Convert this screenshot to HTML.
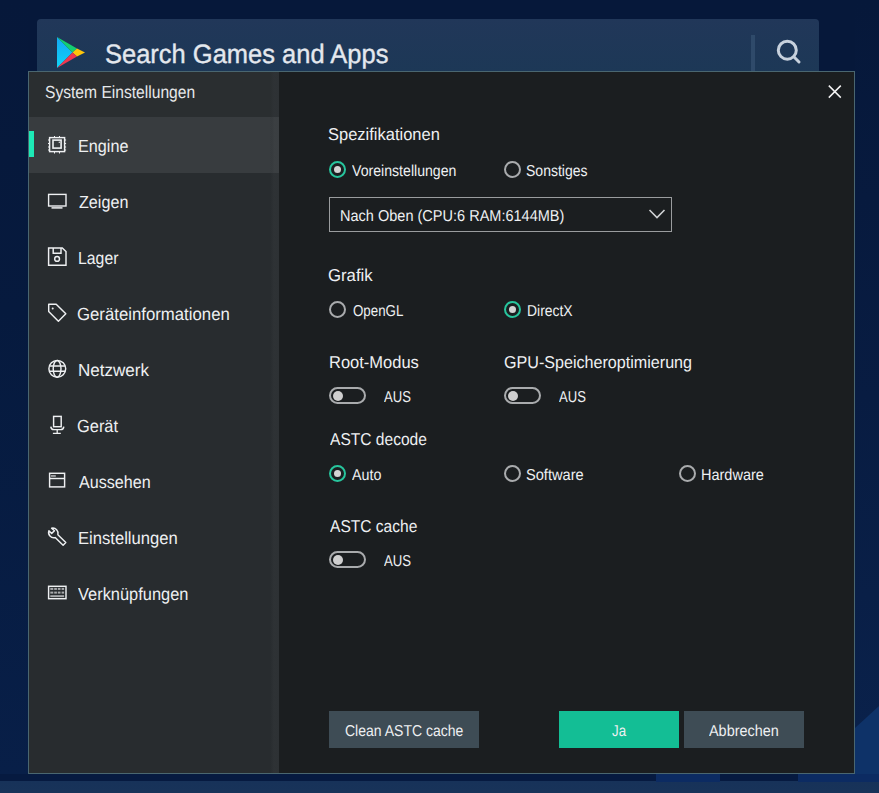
<!DOCTYPE html>
<html><head><meta charset="utf-8">
<style>
*{margin:0;padding:0;box-sizing:border-box}
html,body{width:879px;height:793px;overflow:hidden}
body{position:relative;background:#06183a;font-family:"Liberation Sans",sans-serif;color:#eceef0}
.a{position:absolute}
.t{position:absolute;white-space:nowrap;line-height:1;transform-origin:0 0;text-rendering:geometricPrecision}
#bgR{left:855px;top:0;width:24px;height:793px;background:linear-gradient(#06183a 0%,#081c42 50%,#0a224c 100%)}
#bgB{left:0;top:774px;width:879px;height:19px;background:linear-gradient(#061a40 0,#061a40 7px,#173259 7px,#183359 100%)}
#search{left:37px;top:19px;width:782px;height:60px;background:linear-gradient(#213759,#1c3856);border-radius:4px}
#dlg{left:28px;top:71px;width:827px;height:703px;border:1px solid #4a6670;background:#1b1e20}
#side{left:29px;top:72px;width:250px;height:701px;background:#282c2f}
#sideHead{left:29px;top:72px;width:250px;height:45px;background:#2a2e30}
#active{left:29px;top:117px;width:250px;height:56px;background:#383c3f}
#bar{left:29px;top:131px;width:5px;height:26px;background:#1de9b6}
.radio{position:absolute;width:17px;height:17px;border-radius:50%;border:2px solid #a9abad}
.radio.on{border-color:#27c59d}
.radio.on::after{content:"";position:absolute;left:3px;top:3px;width:7px;height:7px;border-radius:50%;background:#d4d4d4}
.tog{position:absolute;width:37px;height:17px;border-radius:9px;border:2px solid #a9abad}
.tog::after{content:"";position:absolute;left:1.5px;top:1.5px;width:10px;height:10px;border-radius:50%;background:#cfcfcf}
.btn{position:absolute;top:711px;height:37px;background:#3e4c55}
</style></head><body>
<div class="a" style="left:0;top:0;width:28px;height:774px;background:linear-gradient(#06183a 0%,#061a3e 40%,#081f48 100%)"></div>
<div class="a" id="bgR"></div>
<div class="a" id="bgB"></div>
<div class="a" style="left:656px;top:774px;width:64px;height:8px;background:#0c2b62"></div>
<div class="a" style="left:798px;top:774px;width:81px;height:8px;background:#0c2b62"></div>
<svg class="a" style="left:855px;top:600px" width="24" height="174"><path d="M0 128 L24 106 V174 H0 Z" fill="#0e3268"/></svg>
<div class="a" id="search">
  <svg class="a" style="left:19px;top:18px" width="30" height="31" viewBox="0 0 30 31">
    <defs><linearGradient id="pb" x1="0" y1="0" x2="0" y2="1"><stop offset="0" stop-color="#14a8f4"/><stop offset="1" stop-color="#10d4f6"/></linearGradient></defs><path d="M1 0 L16.5 15.5 L1 31 Z" fill="url(#pb)"/>
    <path d="M1 0 L21 11.5 L16.5 15.5 Z" fill="#14d072"/>
    <path d="M21 11.5 L29 15.5 L21 19.5 L16.5 15.5 Z" fill="#ffc60a"/>
    <path d="M16.5 15.5 L21 19.5 L1 31 Z" fill="#f0374f"/>
  </svg>
  <div class="t" style="left:68px;top:22px;font-size:26.5px;transform:scaleX(0.962);color:#e4e8ee;-webkit-text-stroke:0.35px #e4e8ee">Search Games and Apps</div>
  <div class="a" style="left:714px;top:16px;width:4px;height:40px;background:#2f4a6a"></div>
  <svg class="a" style="left:736px;top:19px" width="30" height="30" viewBox="0 0 30 30">
    <circle cx="14.3" cy="12.2" r="9" fill="none" stroke="#c7d1dd" stroke-width="3"/>
    <path d="M20.8 18.8 L26 24" stroke="#c7d1dd" stroke-width="3" stroke-linecap="round"/>
  </svg>
</div>
<div class="a" id="dlg"></div>
<div class="a" id="side"></div>
<div class="a" id="sideHead"></div>
<div class="a" id="active"></div>
<div class="a" id="bar"></div>
<div class="a" style="left:270px;top:72px;width:9px;height:701px;background:linear-gradient(90deg,rgba(46,50,53,0),#2e3235 45%,#2d3134)"></div>
<div class="a" style="left:270px;top:117px;width:9px;height:56px;background:linear-gradient(90deg,rgba(60,64,67,0),#3b3f42 45%,#3a3e41)"></div>
<svg class="a" style="left:827px;top:84px" width="16" height="16" viewBox="0 0 16 16">
  <path d="M1.8 1.6 L13.8 13.6 M13.8 1.6 L1.8 13.6" stroke="#f2f2f2" stroke-width="1.5"/>
</svg>
<svg class="a" style="left:0;top:0" width="879" height="793" viewBox="0 0 879 793" fill="none" stroke="#eef0f2" stroke-width="1.45">
  <!-- chip -->
  <g>
    <rect x="49.6" y="137.6" width="15" height="14"/>
    <rect x="53" y="140.1" width="8.1" height="8" stroke-width="1.6"/>
    <path d="M54.5 136 v1.5 M59.5 136 v1.5 M54.5 152 v1.5 M59.5 152 v1.5 M48 140 h1.5 M48 143.5 h1.5 M48 147 h1.5 M48 150 h1.5 M64.6 140 h1.5 M64.6 143.5 h1.5 M64.6 147 h1.5 M64.6 150 h1.5" stroke-width="1"/>
    <circle cx="59.3" cy="142.3" r="0.7" fill="#e9ebed" stroke="none"/>
  </g>
  <!-- monitor -->
  <rect x="48.6" y="194.4" width="17.4" height="11.6" stroke-width="1.4"/>
  <path d="M51.5 207.9 H62.5" stroke-width="1.5"/>
  <!-- floppy -->
  <path d="M48.6 247.9 H62.3 L66 251.6 V265.2 H48.6 Z"/>
  <path d="M53.2 247.9 V253.2 H61 V247.9"/>
  <circle cx="57.1" cy="258.9" r="2.4"/>
  <!-- tag -->
  <path d="M48.7 304.2 H56.2 L65.8 313.8 L58.4 321.2 L48.7 311.6 Z" stroke-linejoin="round"/>
  <circle cx="52.7" cy="308.4" r="1" fill="#e9ebed" stroke="none"/>
  <!-- globe -->
  <circle cx="57.3" cy="368.8" r="8.4"/>
  <ellipse cx="57.1" cy="368.8" rx="3.9" ry="8.4"/>
  <path d="M49.5 366 H65 M49.5 371.3 H65" stroke-width="1.5"/>
  <!-- device -->
  <rect x="53.6" y="416.4" width="7.6" height="10.3"/>
  <path d="M50.8 426.6 Q51 429.6 54 429.6 H60.6 Q63.6 429.6 63.8 426.6" />
  <path d="M57.2 429.6 V432.8 M52.9 433.3 H60.8" stroke-width="1.3"/>
  <!-- window -->
  <rect x="49.6" y="473.3" width="15" height="13.6"/>
  <path d="M49.6 478.5 H64.6"/>
  <rect x="51" y="475" width="4.8" height="1.9" fill="#9c9ea0" stroke="none"/>
  <!-- wrench -->
  <path transform="translate(47,526)" d="M1.9 4.7 L4.7 7.4 L7.5 4.8 L4.6 2.2 A5.3 5.3 0 0 1 10.9 8.8 L18.8 16.5 L16.1 19.2 L8.2 11.6 A5.3 5.3 0 0 1 1.9 4.7 Z" stroke-linejoin="round"/>
  <!-- keyboard -->
  <rect x="48.6" y="586.3" width="17.4" height="12.4"/>
  <g fill="#a9abad" stroke="none">
    <rect x="50.3" y="587.9" width="3" height="2"/><rect x="54.2" y="587.9" width="2.7" height="2"/><rect x="57.8" y="587.9" width="2.7" height="2"/><rect x="61.6" y="587.9" width="2.5" height="2"/>
    <rect x="50.3" y="591.6" width="3" height="2"/><rect x="54.2" y="591.6" width="2.7" height="2"/><rect x="57.8" y="591.6" width="2.7" height="2"/><rect x="61.6" y="591.6" width="2.5" height="2"/>
    <rect x="50.3" y="595.2" width="13.8" height="1.9"/>
  </g>
</svg>


<div class="radio on" style="left:329px;top:161px"></div>
<div class="radio" style="left:504px;top:161px"></div>
<div class="a" style="left:329px;top:197px;width:343px;height:35px;border:1px solid #9a9c9e"></div>
<svg class="a" style="left:648px;top:208px" width="18" height="12" viewBox="0 0 18 12">
  <path d="M1.5 2 L9 9.5 L16.5 2" fill="none" stroke="#cfd1d3" stroke-width="1.6"/>
</svg>
<div class="radio" style="left:329px;top:301px"></div>
<div class="radio on" style="left:504px;top:301px"></div>
<div class="tog" style="left:329px;top:387px"></div>
<div class="tog" style="left:504px;top:387px"></div>
<div class="radio on" style="left:329px;top:465px"></div>
<div class="radio" style="left:504px;top:465px"></div>
<div class="radio" style="left:679px;top:465px"></div>
<div class="tog" style="left:329px;top:551px"></div>

<div class="btn" style="left:329px;width:150px"></div>
<div class="btn" style="left:559px;width:120px;background:#13be95"></div>
<div class="btn" style="left:684px;width:120px"></div>
<div class="t" style="left:44.61px;top:84px;font-size:17.5px;transform:scaleX(0.8922);color:#e6e8ea">System Einstellungen</div>
<div class="t" style="left:78.08px;top:138px;font-size:17.5px;transform:scaleX(0.9245);color:#eef0f2">Engine</div>
<div class="t" style="left:78.7px;top:194px;font-size:17.5px;transform:scaleX(0.9226);color:#eef0f2">Zeigen</div>
<div class="t" style="left:77.8px;top:250px;font-size:17.5px;transform:scaleX(0.9045);color:#eef0f2">Lager</div>
<div class="t" style="left:77.24px;top:306px;font-size:17.5px;transform:scaleX(0.9576);color:#eef0f2">Geräteinformationen</div>
<div class="t" style="left:77.73px;top:362px;font-size:17.5px;transform:scaleX(0.9736);color:#eef0f2">Netzwerk</div>
<div class="t" style="left:77.26px;top:418px;font-size:17.5px;transform:scaleX(0.9372);color:#eef0f2">Gerät</div>
<div class="t" style="left:78.7px;top:474px;font-size:17.5px;transform:scaleX(0.9221);color:#eef0f2">Aussehen</div>
<div class="t" style="left:77.75px;top:530px;font-size:17.5px;transform:scaleX(0.9495);color:#eef0f2">Einstellungen</div>
<div class="t" style="left:78.2px;top:586px;font-size:17.5px;transform:scaleX(0.9376);color:#eef0f2">Verknüpfungen</div>
<div class="t" style="left:328.14px;top:126px;font-size:17.2px;transform:scaleX(0.9591);color:#eef0f2">Spezifikationen</div>
<div class="t" style="left:328.03px;top:267px;font-size:17.2px;transform:scaleX(0.9733);color:#eef0f2">Grafik</div>
<div class="t" style="left:328.84px;top:354px;font-size:17.2px;transform:scaleX(0.9598);color:#eef0f2">Root-Modus</div>
<div class="t" style="left:503.56px;top:354px;font-size:17.2px;transform:scaleX(0.9372);color:#eef0f2">GPU-Speicheroptimierung</div>
<div class="t" style="left:329.8px;top:431px;font-size:17.2px;transform:scaleX(0.9056);color:#eef0f2">ASTC decode</div>
<div class="t" style="left:329.8px;top:518px;font-size:17.2px;transform:scaleX(0.9052);color:#eef0f2">ASTC cache</div>
<div class="t" style="left:352.0px;top:164px;font-size:15.8px;transform:scaleX(0.894);color:#eef0f2">Voreinstellungen</div>
<div class="t" style="left:526.41px;top:164px;font-size:15.8px;transform:scaleX(0.8868);color:#eef0f2">Sonstiges</div>
<div class="t" style="left:339.58px;top:209px;font-size:15.8px;transform:scaleX(0.9194);color:#eef0f2">Nach Oben (CPU:6 RAM:6144MB)</div>
<div class="t" style="left:352.9px;top:304px;font-size:15.8px;transform:scaleX(0.8433);color:#eef0f2">OpenGL</div>
<div class="t" style="left:527.02px;top:304px;font-size:15.8px;transform:scaleX(0.8804);color:#eef0f2">DirectX</div>
<div class="t" style="left:384.3px;top:390px;font-size:15.8px;transform:scaleX(0.8281);color:#eef0f2">AUS</div>
<div class="t" style="left:559.3px;top:390px;font-size:15.8px;transform:scaleX(0.8281);color:#eef0f2">AUS</div>
<div class="t" style="left:352.3px;top:468px;font-size:15.8px;transform:scaleX(0.9031);color:#eef0f2">Auto</div>
<div class="t" style="left:526.08px;top:468px;font-size:15.8px;transform:scaleX(0.9246);color:#eef0f2">Software</div>
<div class="t" style="left:701.28px;top:468px;font-size:15.8px;transform:scaleX(0.9179);color:#eef0f2">Hardware</div>
<div class="t" style="left:384.0px;top:554px;font-size:15.8px;transform:scaleX(0.8344);color:#eef0f2">AUS</div>
<div class="t" style="left:344.8px;top:724px;font-size:15.8px;transform:scaleX(0.8865);color:#eef0f2">Clean ASTC cache</div>
<div class="t" style="left:612.0px;top:724px;font-size:15.8px;transform:scaleX(0.8412);color:#eef0f2">Ja</div>
<div class="t" style="left:709.0px;top:724px;font-size:15.8px;transform:scaleX(0.9132);color:#eef0f2">Abbrechen</div>
</body></html>
